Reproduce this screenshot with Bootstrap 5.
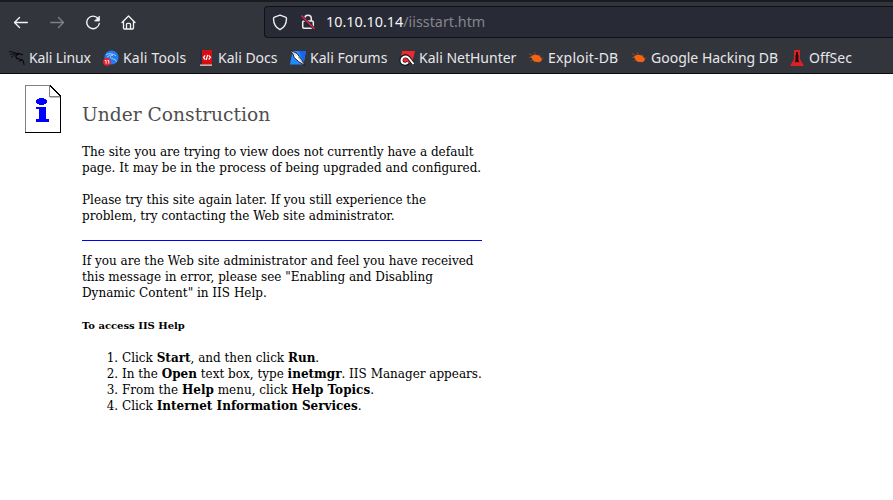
<!DOCTYPE html>
<html lang="en">
<head>
<meta charset="utf-8">
<meta name="viewport" content="width=device-width, initial-scale=1">
<title>Under Construction</title>
<link href="https://cdn.jsdelivr.net/npm/bootstrap@5.3.0/dist/css/bootstrap.min.css" rel="stylesheet">
<style>
body{height:500px;overflow:hidden;background:#fff;color:#000}
.chrome{height:74px;background:#33353d;border-top:2px solid #191b20;border-bottom:1px solid #0c0c0f;font-family:"Noto Sans",sans-serif;color:#e7e7e9}
.toolbar{height:40px}
.nav-icons{width:264px;padding-left:13px;gap:20px}
.address{height:32px;background:#282a36;border:1px solid #101116;border-right:0;border-radius:4px 0 0 4px;padding-left:7px;font-size:14.35px;line-height:30px;color:#f4f4f5}
.address .path{color:#85868d}
.shield{margin-right:12px}
.lock{margin-right:10px}
.bookmarks{height:31px;font-size:14px;line-height:31px;padding-left:9px}
.bm svg{margin-right:4px}
.tight{letter-spacing:-.12px}
.loose{letter-spacing:.2px}
.page{font:12px/16px "DejaVu Serif",serif;padding-left:25px;padding-top:11px}
.notice{width:400px;margin-left:21px;padding-top:18px}
.notice h1{font-size:18.67px;line-height:24px;font-weight:400;color:#4e4e4e;margin-bottom:17px}
.notice p{margin-bottom:16px}
.notice hr{border:0;height:1px;background:#00f;opacity:1;margin:0 0 12px}
.notice h5{font-size:10px;line-height:16px;font-weight:700;margin:17px 0 16px}
.notice ol{padding-left:40px}
</style>
<script src="https://cdn.jsdelivr.net/npm/bootstrap@5.3.0/dist/js/bootstrap.bundle.min.js"></script>
</head>
<body>
<header class="chrome">
  <div class="toolbar d-flex align-items-center">
    <nav class="nav-icons d-flex flex-shrink-0" aria-label="Navigation">
      <svg width="16" height="16" fill="none" stroke="#f4f4f5" stroke-width="1.4" stroke-linecap="round" stroke-linejoin="round"><path d="M14.3 8.500H1.5M6.5 3.500L1.5 8.500l5 5"/></svg>
      <svg width="16" height="16" fill="none" stroke="#7e8086" stroke-width="1.4" stroke-linecap="round" stroke-linejoin="round"><path d="M1.7 8.500h12.8M9.5 3.500l5 5-5 5"/></svg>
      <svg width="16" height="16" fill="none" stroke="#f4f4f5" stroke-width="1.4" stroke-linecap="round"><path d="M13 4.500A6.300 6.300 0 1 0 14.300 9.500"/><path d="M14.4 2.500v4.500H9.9z" fill="#f4f4f5" stroke-width=".8" stroke-linejoin="round"/></svg>
      <svg width="16" height="16" fill="none" stroke="#f4f4f5" stroke-width="1.3" stroke-linecap="round" stroke-linejoin="round"><path d="M1 8.500l6.500-6.500L14 8.500M2.500 7.500v6.500q0 1 1 1h8q1 0 1-1V7.500M5.500 14.700V10.300q0-1 1-1h2q1 0 1 1v4.400"/></svg>
    </nav>
    <div class="address d-flex align-items-center flex-grow-1">
      <svg class="shield" width="16" height="17" fill="none" stroke="#eeeef0" stroke-width="1.4" stroke-linejoin="round"><path d="M8 1.2l5.5 2q1 .4 1 1.5Q14.300 12.500 8 15.700 1.700 12.500 1.500 4.700q0-1.100 1-1.500z"/></svg>
      <svg class="lock" width="16" height="16" fill="none" stroke="#eeeef0" stroke-width="1.5"><path d="M4.700 7V4.500a3.300 3.300 0 0 1 6.600 0V7"/><rect x="2.700" y="7" width="10.600" height="7.300" rx="1.200"/><path d="M1 1.600L14.500 15" stroke="#282a36" stroke-width="3"/><path d="M1.300 1.500L14.500 14.700" stroke="#e22850" stroke-width="1.400"/></svg>
      <span>10.10.10.14<span class="path">/iisstart.htm</span></span>
    </div>
  </div>
  <nav class="bookmarks d-flex text-nowrap" aria-label="Bookmarks">
    <div class="bm tight d-flex align-items-center" style="width:94px">
      <svg width="16" height="16" fill="none" stroke="#07080a" stroke-linecap="round" stroke-linejoin="round"><path d="M.5 1.500l5 1 4 1.300M1.500 4.500l3-.800 4 .600M2.500 7.300L6 4.500" stroke-width=".9"/><path d="M9.500 3.300l2.500 1 1.500.400M9.500 4.300C7 4.600 6 6.500 7.500 8c1.500 1.500 5 .400 6.700 3M14.300 11l.700 3.500M12.500 10.300l-2 .700" stroke-width="1.200"/></svg>Kali Linux
    </div>
    <div class="bm loose d-flex align-items-center" style="width:95px">
      <svg width="16" height="16"><circle cx="8.500" cy="7.500" r="7" fill="#247cf0"/><path d="M3 4.500q5-2 8 .200l2 1M4 7q4-3 6-2c-4 1-3 3.500 0 3.800q3 .200 3.500 3.200" fill="none" stroke="#b5d5fc" stroke-width=".8"/><circle cx="4" cy="11.800" r="3.900" fill="#e3222d"/><path d="M1.800 10.500h1.300v3.200M4.500 10.500h1.300v3.200" fill="none" stroke="#fff" stroke-width=".9"/></svg>Kali Tools
    </div>
    <div class="bm d-flex align-items-center" style="width:92px">
      <svg width="16" height="16"><path d="M2 0h12v15H2z" fill="#d70d12"/><path d="M2 0h2v15H2z" fill="#292b45"/><path d="M2 14.500h12v1.300H2z" fill="#d8d5d6"/><path d="M7.200 5.300L5.400 7.500l1.800 2M10.700 5.300l1.800 2-1.800 2.200M9.700 4.800L8.200 10" fill="none" stroke="#fff" stroke-width="1.200"/></svg>Kali Docs
    </div>
    <div class="bm d-flex align-items-center" style="width:109px">
      <svg width="16" height="16"><path d="M2.500 1H16l-2.500 13.500H0z" fill="#218bff"/><path d="M9 1h7l-2.500 12z" fill="#1765ef"/><path d="M0 .500l4 1.500 3 1.500 4.500 6 3.500 6L8.500 11.500 4.200 7.500 3 4z" fill="#fff" stroke="#17191e" stroke-width=".9"/><path d="M2 1.500l4 4M8 7l5 6" stroke="#777" stroke-width=".6"/></svg>Kali Forums
    </div>
    <div class="bm d-flex align-items-center" style="width:129px">
      <svg width="16" height="16"><path d="M3 1h13l-3 12H1z" fill="#ef292f"/><path d="M14 13.300L9.500 7.500Q5.500 4.300 2.800 8q-1.500 3.500 1 5.300 3.500 1.800 5.700-.800" fill="none" stroke="#15171c" stroke-width="3.800"/><path d="M14.500 14L9.500 7.700Q6 5 3 8.300 1.700 11.500 4 13.200q3 1.300 5-.900" fill="none" stroke="#fff" stroke-width="2"/></svg>Kali NetHunter
    </div>
    <div class="bm loose d-flex align-items-center" style="width:103px">
      <svg width="16" height="16"><path d="M1 3.500l5 2.500M6 2l2 4M.800 7.500L5 7M2.500 11l4-2M10 4.500l3 2M8 11l-2 1M11 10.500l-.500 2.500M12 8.500l3.500-.500" stroke="#9a4b29" stroke-width=".8"/><path d="M2.500 7l3-2q4-.800 6.500 1.500l2 3-1.300 2.300-4.200.200q-3.500-.500-4.500-3.500z" fill="#f36513"/></svg>Exploit-DB
    </div>
    <div class="bm d-flex align-items-center" style="width:158px">
      <svg width="16" height="16"><path d="M1 3.500l5 2.500M6 2l2 4M.800 7.500L5 7M2.500 11l4-2M10 4.500l3 2M8 11l-2 1M11 10.500l-.500 2.500M12 8.500l3.500-.500" stroke="#9a4b29" stroke-width=".8"/><path d="M2.500 7l3-2q4-.800 6.500 1.500l2 3-1.300 2.300-4.200.200q-3.500-.500-4.500-3.500z" fill="#f36513"/></svg>Google Hacking DB
    </div>
    <div class="bm d-flex align-items-center">
      <svg width="16" height="16"><path d="M5 0h6v9l4 7H1l4-7z" fill="#dc2023"/><path d="M7 2h2v3h.500v5l.7 2.500-2.200-.800-2.200.800L6.500 10V5H7z" fill="#260b0d"/></svg>OffSec
    </div>
  </nav>
</header>
<main class="page d-flex align-items-start">
  <svg width="36" height="48" shape-rendering="crispEdges" class="flex-shrink-0" role="img" aria-label="Information"><path d="M.5 47V.5H25" fill="none" stroke="#808080"/><path d="M0 47.500h35.500V11" fill="none" stroke="#000"/><path d="M24.500 0v12.500H35V11z" fill="#c0c0c0"/><path d="M24.500 .500v10.500H35z" fill="#fff"/><path d="M24.500 .500v10.500H35" fill="none" stroke="#808080"/><path d="M25 .500L35.500 11" fill="none" stroke="#000"/><path d="M14 13h5v1h2v1h1v3h-1v1h-2v1h-5v-1h-2v-1h-1v-3h1v-1h2zM11 22h10v12h3v3H11v-3h3V24h-3z" fill="#00f"/></svg>
  <div class="notice">
    <h1>Under Construction</h1>
    <p>The site you are trying to view does not currently have a default page. It may be in the process of being upgraded and configured.</p>
    <p>Please try this site again later. If you still experience the problem, try contacting the Web site administrator.</p>
    <hr>
    <p>If you are the Web site administrator and feel you have received this message in error, please see "Enabling and Disabling Dynamic Content" in IIS Help.</p>
    <h5>To access IIS Help</h5>
    <ol class="mb-0">
      <li>Click <b>Start</b>, and then click <b>Run</b>.</li>
      <li>In the <b>Open</b> text box, type <b>inetmgr</b>. IIS Manager appears.</li>
      <li>From the <b>Help</b> menu, click <b>Help Topics</b>.</li>
      <li>Click <b>Internet Information Services</b>.</li>
    </ol>
  </div>
</main>
</body>
</html>
